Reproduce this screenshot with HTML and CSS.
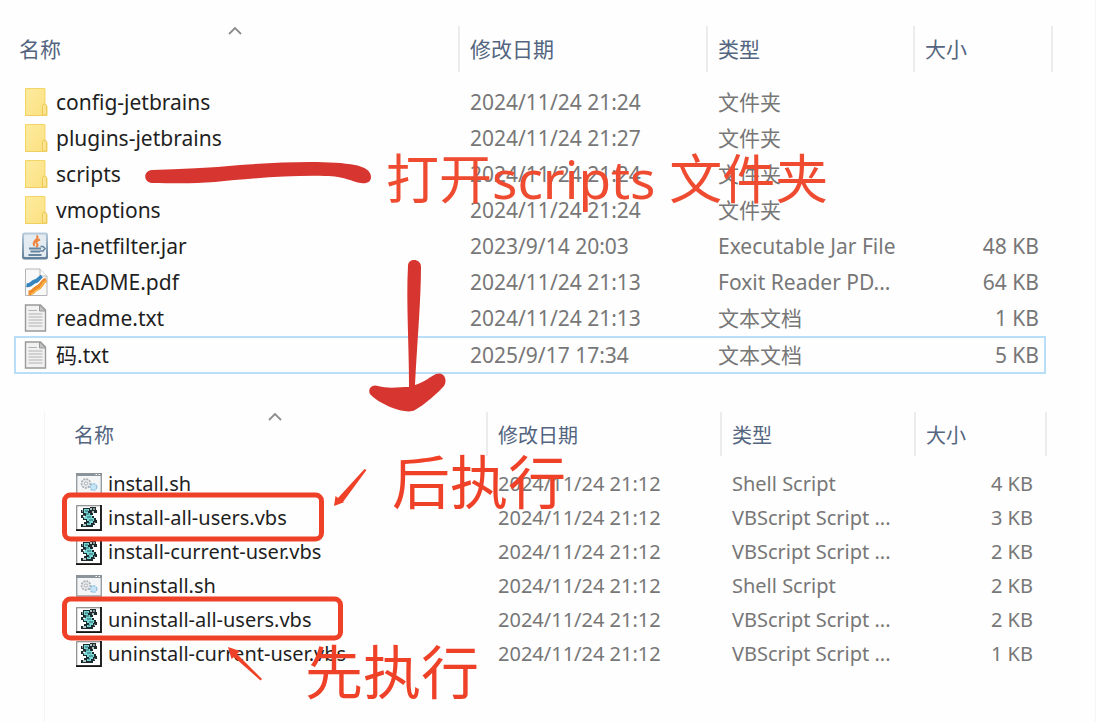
FILE: index.html
```html
<!DOCTYPE html>
<html lang="zh-CN">
<head>
    <meta charset="UTF-8">
    <meta name="viewport" content="width=device-width, initial-scale=1.0">
    <title>scripts 文件夹</title>
    <link rel="stylesheet" href="styles.css">
</head>
<body>
    <!-- 图标定义 -->
    <svg class="defs" width="0" height="0" aria-hidden="true">
        <defs>
            <linearGradient id="folderFill" x1="0" y1="0" x2="1" y2="1">
                <stop offset="0" stop-color="#fdeb9f"/>
                <stop offset="1" stop-color="#fbe080"/>
            </linearGradient>
            <linearGradient id="jarFill" x1="0" y1="0" x2="0" y2="1">
                <stop offset="0" stop-color="#b9cddd"/>
                <stop offset="1" stop-color="#5f7d97"/>
            </linearGradient>
        </defs>
        <symbol id="folder" viewBox="0 0 26 30">
            <path d="M3.500 1.500H23V17L25 19V28.500H3.500Z" fill="url(#folderFill)" stroke="#f2d566"/>
            <path d="M20.500 28V19.500Q20.500 17 22.500 17T24.500 19.500V28Z" fill="#fbe391" stroke="#edc955"/>
            <path d="M3 28.500H25" stroke="#efcf62"/>
        </symbol>
        <symbol id="jar" viewBox="0 0 26 30">
            <rect x="0" y="1.500" width="26" height="27" rx="2.500" fill="url(#jarFill)"/>
            <rect x="2" y="3.500" width="22" height="22.500" rx="1" fill="#e4ebf1"/>
            <path d="M14.500 4.500C19 8 8.500 10 12.500 15M18 8.500C13 10.500 14 12 15.500 13.500Q16 15 14 16" fill="none" stroke="#ee843b" stroke-width="2"/>
            <path d="M7 17.500H19M8.500 20.500H18M6.500 24H19.500" fill="none" stroke="#66859f" stroke-width="2"/>
            <path d="M18.500 15.500H21L23 17.500 21 20H18" fill="none" stroke="#66859f" stroke-width="1.600"/>
        </symbol>
        <symbol id="pdf" viewBox="0 0 26 30">
            <path d="M3.500 2H18L25 9V28.500H3.500Z" fill="#f8f8f8" stroke="#b5b5b5"/>
            <path d="M18 2V9H25" fill="#fff" stroke="#b5b5b5"/>
            <path d="M4.500 18C10 19 9 15.500 12.500 14.500C16 14 16 12 20 9.500" fill="none" stroke="#3685bd" stroke-width="4"/>
            <path d="M6.500 26C12 26 11 22.500 15 21C20 19.500 18 15 24 12.500" fill="none" stroke="#f08b2b" stroke-width="5"/>
            <path d="M5 22.500C11 22.500 11 18.500 14 18C18.500 16.500 17 12.500 23 10" fill="none" stroke="#fff" stroke-width="1.200"/>
            <path d="M9 27C12.500 26 12 24 16 22.500C20 21 19 16 24 14" fill="none" stroke="#fbb94b" stroke-width="1.400"/>
        </symbol>
        <symbol id="txt" viewBox="0 0 26 30">
            <path d="M3.500 2H18.500L23.500 7V28H3.500Z" fill="#f1f1f1" stroke="#999" stroke-width="1.400"/>
            <path d="M17.500 2V8H23.500Z" fill="#c4c4c4" stroke="#999"/>
            <path d="M6.500 7.500H15M6.500 11H20.500M6.500 14H20.500M6.500 17H20.500M6.500 20H20.500M6.500 23H20.500" stroke="#b2b2b2" stroke-width="1.200"/>
        </symbol>
        <symbol id="sh" viewBox="0 0 26 30">
            <rect x="0.700" y="5" width="24.600" height="20" fill="#f4f5f6" stroke="#969da3" stroke-width="1.400"/>
            <path d="M0 5.500H26" stroke="#8b949b" stroke-width="3"/>
            <path d="M19.500 5.500H21M22.500 5.500H24" stroke="#fff"/>
            <circle cx="10" cy="14.500" r="4.500" fill="#e5e8ea" stroke="#a9afb4" stroke-width="1.600" stroke-dasharray="2 1"/>
            <circle cx="10" cy="14.500" r="1.500" fill="#fff" stroke="#a9afb4"/>
            <circle cx="17.500" cy="18" r="3.300" fill="#c5e4f6" stroke="#91bddb" stroke-width="1.300" stroke-dasharray="2 1"/>
        </symbol>
        <symbol id="vbs" viewBox="0 0 26 30">
            <rect x="0.700" y="2.700" width="24" height="24" fill="#fff" stroke="#8b8b8b" stroke-width="1.200"/>
            <path d="M25 2V27.200H0" fill="none" stroke="#151515" stroke-width="1.800"/>
            <path d="M7 5H14V4H20V7H21V10H17V12H16V13H18V15H20V17H21V20H19V22H17V24H5V21H8V19H10V17H7V15H5V12H7V10H5V7H7Z" fill="#1c2b2d"/>
            <path d="M8 6H13V8H12V10H14V12H16V15H18V18H17V20H15V22H11V20H13V18H11V16H8V13H10V10H8Z" fill="#79d8d8"/>
            <path d="M9 8H12M9 11H13M11 14H15M13 17H17M12 20H14" stroke="#275e60"/>
            <path d="M7 13.500H9M14 6H16M16 9H18M7 22H10" stroke="#effafa" stroke-width="1.400"/>
            <path d="M17 6H19M18 20H19M6 8H7" stroke="#fff" stroke-width="1.200"/>
        </symbol>
        <symbol id="caret" viewBox="0 0 14 9">
            <path d="M1 8L7 2L13 8" fill="none" stroke="#8c8c8c" stroke-width="1.800"/>
        </symbol>
    </svg>

    <main class="page">
        <section class="panel-root">
            <table class="files">
                <thead>
                    <tr>
                        <th class="col-name">名称<svg class="caret"><use href="#caret"/></svg></th>
                        <th class="col-date">修改日期</th>
                        <th class="col-type">类型</th>
                        <th class="col-size">大小</th>
                        <th class="col-end"></th>
                    </tr>
                </thead>
                <tbody>
                    <tr>
                        <td><div class="name"><svg><use href="#folder"/></svg>config-jetbrains</div></td>
                        <td>2024/11/24 21:24</td>
                        <td>文件夹</td>
                        <td></td>
                    </tr>
                    <tr>
                        <td><div class="name"><svg><use href="#folder"/></svg>plugins-jetbrains</div></td>
                        <td>2024/11/24 21:27</td>
                        <td>文件夹</td>
                        <td></td>
                    </tr>
                    <tr>
                        <td><div class="name"><svg><use href="#folder"/></svg>scripts</div></td>
                        <td>2024/11/24 21:24</td>
                        <td>文件夹</td>
                        <td></td>
                    </tr>
                    <tr>
                        <td><div class="name"><svg><use href="#folder"/></svg>vmoptions</div></td>
                        <td>2024/11/24 21:24</td>
                        <td>文件夹</td>
                        <td></td>
                    </tr>
                    <tr>
                        <td><div class="name"><svg><use href="#jar"/></svg>ja-netfilter.jar</div></td>
                        <td>2023/9/14 20:03</td>
                        <td>Executable Jar File</td>
                        <td class="size">48 KB</td>
                    </tr>
                    <tr>
                        <td><div class="name"><svg><use href="#pdf"/></svg>README.pdf</div></td>
                        <td>2024/11/24 21:13</td>
                        <td>Foxit Reader PD...</td>
                        <td class="size">64 KB</td>
                    </tr>
                    <tr>
                        <td><div class="name"><svg><use href="#txt"/></svg>readme.txt</div></td>
                        <td>2024/11/24 21:13</td>
                        <td>文本文档</td>
                        <td class="size">1 KB</td>
                    </tr>
                    <tr class="selected">
                        <td><div class="name"><svg><use href="#txt"/></svg>码.txt</div></td>
                        <td>2025/9/17 17:34</td>
                        <td>文本文档</td>
                        <td class="size">5 KB</td>
                    </tr>
                </tbody>
            </table>
        </section>

        <section class="panel-scripts">
            <table class="files">
                <thead>
                    <tr>
                        <th class="col-name">名称<svg class="caret"><use href="#caret"/></svg></th>
                        <th class="col-date">修改日期</th>
                        <th class="col-type">类型</th>
                        <th class="col-size">大小</th>
                        <th class="col-end"></th>
                    </tr>
                </thead>
                <tbody>
                    <tr>
                        <td><div class="name"><svg><use href="#sh"/></svg>install.sh</div></td>
                        <td>2024/11/24 21:12</td>
                        <td>Shell Script</td>
                        <td class="size">4 KB</td>
                    </tr>
                    <tr>
                        <td><div class="name"><svg><use href="#vbs"/></svg>install-all-users.vbs</div></td>
                        <td>2024/11/24 21:12</td>
                        <td>VBScript Script ...</td>
                        <td class="size">3 KB</td>
                    </tr>
                    <tr>
                        <td><div class="name"><svg><use href="#vbs"/></svg>install-current-user.vbs</div></td>
                        <td>2024/11/24 21:12</td>
                        <td>VBScript Script ...</td>
                        <td class="size">2 KB</td>
                    </tr>
                    <tr>
                        <td><div class="name"><svg><use href="#sh"/></svg>uninstall.sh</div></td>
                        <td>2024/11/24 21:12</td>
                        <td>Shell Script</td>
                        <td class="size">2 KB</td>
                    </tr>
                    <tr>
                        <td><div class="name"><svg><use href="#vbs"/></svg>uninstall-all-users.vbs</div></td>
                        <td>2024/11/24 21:12</td>
                        <td>VBScript Script ...</td>
                        <td class="size">2 KB</td>
                    </tr>
                    <tr>
                        <td><div class="name"><svg><use href="#vbs"/></svg>uninstall-current-user.vbs</div></td>
                        <td>2024/11/24 21:12</td>
                        <td>VBScript Script ...</td>
                        <td class="size">1 KB</td>
                    </tr>
                </tbody>
            </table>
        </section>

        <!-- 红色标注 -->
        <svg class="marks" width="1096" height="722" viewBox="0 0 1096 722" aria-hidden="true">
            <g fill="#d7352f">
                <path d="M152 170C180 169 210 168 240 165C280 162 330 160 355 165C365 167 371 171 371 177C371 182 367 184 361 183C352 182 345 176 325 176C290 175 245 179 215 182C190 184 170 183 152 183C143 182 143 171 152 170Z"/>
                <path d="M408 266C408 258 421 258 421 267C421 300 417 345 415 385C425 382 431 376 436 374C444 371 448 380 444 386C438 393 424 405 415 410C410 413 400 411 390 407C382 403 374 399 370 394C367 387 374 384 378 386C388 389 400 387 409 387C409 345 406 300 408 266Z"/>
            </g>
            <g fill="none" stroke="#ee4128" stroke-width="5">
                <rect x="64.500" y="495" width="257" height="44" rx="6"/>
                <rect x="64.500" y="599" width="276" height="39" rx="6"/>
            </g>
            <g fill="#ee4128">
                <path d="M364.500 469L366.500 470L343 502L344.500 502L334 506L335.500 496L338 498Z"/>
                <path d="M228 647L240 651L237 654L262 679L260.500 680.500L234 657L231.500 659Z"/>
            </g>
        </svg>
        <span class="note note-open">打开scripts 文件夹</span>
        <span class="note note-after">后执行</span>
        <span class="note note-first">先执行</span>
    </main>
</body>
</html>
```
FILE: styles.css
```css
body {
    margin: 0;
    background-color: #fefefe;
    color: #1f1f1f;
    font-family: "Noto Sans", "Noto Sans CJK SC", sans-serif;
}
.defs {
    position: absolute;
}
.page {
    position: relative;
    min-height: 100vh;
    box-sizing: border-box;
    padding-top: 26px;
    border-right: 1px solid #f6f6f6;
    overflow: hidden;
}

/* 文件列表 */
.panel-root {
    padding: 0 42px 0 14px;
    font-size: 21px;
}
.panel-scripts {
    margin: 38px 0 0 44px;
    padding: 0 48px 0 20px;
    min-height: 310px;
    box-sizing: border-box;
    border-left: 1px solid #f4f4f4;
    font-size: 20px;
}
.files {
    width: 100%;
    table-layout: fixed;
    border-collapse: separate;
    border-spacing: 0;
    line-height: 28px;
}
.files tbody::before {
    content: "";
    display: block;
    height: 12px;
}
.files th {
    box-sizing: border-box;
    height: 46px;
    padding: 0 0 0 10px;
    border-right: 2px solid #ececec;
    color: #53657f;
    font-weight: normal;
    text-align: left;
}
.files td {
    box-sizing: border-box;
    height: 36px;
    padding: 0 0 0 10px;
    color: #777;
    white-space: nowrap;
}
.files .col-name {
    position: relative;
    padding-left: 5px;
}
.files .col-size {
    border-right: none;
}
.files .col-end {
    width: 7px;
    padding: 0;
}
.files td:first-child {
    padding-left: 8px;
}
.files .size {
    padding-right: 7px;
    text-align: right;
}
.panel-root .col-date {
    width: 248px;
}
.panel-root .col-type {
    width: 207px;
}
.panel-root .col-size {
    width: 131px;
}
.panel-scripts tbody::before {
    height: 11px;
}
.panel-scripts th {
    height: 44px;
    padding-top: 3px;
}
.panel-scripts td {
    height: 34px;
}
.panel-scripts .col-name {
    padding-left: 9px;
}
.panel-scripts td:first-child {
    padding-left: 11px;
}
.panel-scripts .col-date {
    width: 234px;
}
.panel-scripts .col-type {
    width: 194px;
}
.panel-scripts .col-size {
    width: 124px;
}
.panel-scripts .size {
    padding-right: 7px;
}
.caret {
    position: absolute;
    top: 0;
    left: 50%;
    width: 14px;
    height: 9px;
    margin-left: -8px;
}
.name {
    display: flex;
    align-items: center;
    gap: 8px;
    color: #1f1f1f;
}
.panel-scripts .name {
    gap: 6px;
}
.name svg {
    width: 26px;
    height: 30px;
    flex: none;
}
.files .selected td {
    height: 38px;
    border-top: 2px solid #b9def8;
    border-bottom: 2px solid #b9def8;
}
.files .selected td:first-child {
    padding-left: 6px;
    border-left: 2px solid #b9def8;
}
.files .selected .size {
    padding-right: 5px;
    border-right: 2px solid #b9def8;
}

/* 标注 */
.marks {
    position: absolute;
    top: 0;
    left: 0;
}
.note {
    position: absolute;
    color: #ee4128;
    font-size: 58px;
    line-height: 64px;
    white-space: nowrap;
}
.note-open {
    top: 147px;
    left: 386px;
    color: #ee4b30;
    font-size: 53px;
}
.note-after {
    top: 450px;
    left: 392px;
}
.note-first {
    top: 640px;
    left: 305px;
}
```
